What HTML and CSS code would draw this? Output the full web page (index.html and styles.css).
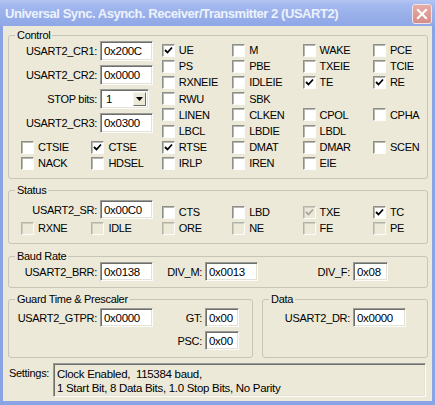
FILE: index.html
```html
<!DOCTYPE html>
<html>
<head>
<meta charset="utf-8">
<link rel="stylesheet" href="styles.css">
</head>
<body>
<div class="window">
  <div class="titlebar">
    <span class="title">Universal Sync. Asynch. Receiver/Transmitter 2 (USART2)</span>
    <span class="close"><svg width="12" height="12" viewBox="0 0 12 12"><path d="M2 2 L10 10 M10 2 L2 10" stroke="#fff" stroke-width="2.2" stroke-linecap="square"/></svg></span>
  </div>
  <div class="client">
    <fieldset class="group control">
      <legend>Control</legend>
      <div class="ctl-top">
        <div class="regs">
          <span class="lbl">USART2_CR1:</span><span class="field">0x200C</span>
          <span class="lbl">USART2_CR2:</span><span class="field">0x0000</span>
          <span class="lbl">STOP bits:</span><span class="combo"><span class="combo-val">1</span><span class="combo-btn"><svg width="7" height="4" viewBox="0 0 7 4"><path d="M0 0 H7 L3.5 4 Z" fill="#000"/></svg></span></span>
          <span class="lbl">USART2_CR3:</span><span class="field">0x0300</span>
        </div>
        <div class="checks4">
          <span class="cb on"><span class="box"><svg width="9" height="9" viewBox="0 0 9 9"><path d="M1 4 L3.5 6.5 L8 1.5" fill="none" stroke="#000" stroke-width="1.8"/></svg></span>UE</span>
          <span class="cb"><span class="box"></span>M</span>
          <span class="cb"><span class="box"></span>WAKE</span>
          <span class="cb"><span class="box"></span>PCE</span>
          <span class="cb"><span class="box"></span>PS</span>
          <span class="cb"><span class="box"></span>PBE</span>
          <span class="cb"><span class="box"></span>TXEIE</span>
          <span class="cb"><span class="box"></span>TCIE</span>
          <span class="cb"><span class="box"></span>RXNEIE</span>
          <span class="cb"><span class="box"></span>IDLEIE</span>
          <span class="cb on"><span class="box"><svg width="9" height="9" viewBox="0 0 9 9"><path d="M1 4 L3.5 6.5 L8 1.5" fill="none" stroke="#000" stroke-width="1.8"/></svg></span>TE</span>
          <span class="cb on"><span class="box"><svg width="9" height="9" viewBox="0 0 9 9"><path d="M1 4 L3.5 6.5 L8 1.5" fill="none" stroke="#000" stroke-width="1.8"/></svg></span>RE</span>
          <span class="cb"><span class="box"></span>RWU</span>
          <span class="cb"><span class="box"></span>SBK</span>
          <span class="empty"></span>
          <span class="empty"></span>
          <span class="cb"><span class="box"></span>LINEN</span>
          <span class="cb"><span class="box"></span>CLKEN</span>
          <span class="cb"><span class="box"></span>CPOL</span>
          <span class="cb"><span class="box"></span>CPHA</span>
          <span class="cb"><span class="box"></span>LBCL</span>
          <span class="cb"><span class="box"></span>LBDIE</span>
          <span class="cb"><span class="box"></span>LBDL</span>
          <span class="empty"></span>
        </div>
      </div>
      <div class="checks6">
        <span class="cb"><span class="box"></span>CTSIE</span>
        <span class="cb on"><span class="box"><svg width="9" height="9" viewBox="0 0 9 9"><path d="M1 4 L3.5 6.5 L8 1.5" fill="none" stroke="#000" stroke-width="1.8"/></svg></span>CTSE</span>
        <span class="cb on"><span class="box"><svg width="9" height="9" viewBox="0 0 9 9"><path d="M1 4 L3.5 6.5 L8 1.5" fill="none" stroke="#000" stroke-width="1.8"/></svg></span>RTSE</span>
        <span class="cb"><span class="box"></span>DMAT</span>
        <span class="cb"><span class="box"></span>DMAR</span>
        <span class="cb"><span class="box"></span>SCEN</span>
        <span class="cb"><span class="box"></span>NACK</span>
        <span class="cb"><span class="box"></span>HDSEL</span>
        <span class="cb"><span class="box"></span>IRLP</span>
        <span class="cb"><span class="box"></span>IREN</span>
        <span class="cb"><span class="box"></span>EIE</span>
        <span class="empty"></span>
      </div>
    </fieldset>

    <fieldset class="group status">
      <legend>Status</legend>
      <div class="status-grid">
        <span class="sr-row"><span class="lbl">USART2_SR:</span><span class="field">0x00C0</span></span>
        <span class="cb up"><span class="box"></span>CTS</span>
        <span class="cb up"><span class="box"></span>LBD</span>
        <span class="cb up dis on"><span class="box"><svg width="9" height="9" viewBox="0 0 9 9"><path d="M1 4 L3.5 6.5 L8 1.5" fill="none" stroke="#a7a69a" stroke-width="1.8"/></svg></span>TXE</span>
        <span class="cb up on"><span class="box"><svg width="9" height="9" viewBox="0 0 9 9"><path d="M1 4 L3.5 6.5 L8 1.5" fill="none" stroke="#000" stroke-width="1.8"/></svg></span>TC</span>
        <span class="cb dis"><span class="box"></span>RXNE</span>
        <span class="cb dis"><span class="box"></span>IDLE</span>
        <span class="cb dis"><span class="box"></span>ORE</span>
        <span class="cb dis"><span class="box"></span>NE</span>
        <span class="cb dis"><span class="box"></span>FE</span>
        <span class="cb dis"><span class="box"></span>PE</span>
      </div>
    </fieldset>

    <fieldset class="group baud">
      <legend>Baud Rate</legend>
      <div class="baud-row">
        <span class="lbl">USART2_BRR:</span><span class="field">0x0138</span>
        <span class="lbl">DIV_M:</span><span class="field">0x0013</span>
        <span class="lbl">DIV_F:</span><span class="field">0x08</span>
      </div>
    </fieldset>

    <div class="pair">
      <fieldset class="group guard">
        <legend>Guard Time &amp; Prescaler</legend>
        <div class="guard-grid">
          <span class="lbl">USART2_GTPR:</span><span class="field">0x0000</span>
          <span class="lbl">GT:</span><span class="field">0x00</span>
          <span class="lbl c3">PSC:</span><span class="field">0x00</span>
        </div>
      </fieldset>
      <fieldset class="group data">
        <legend>Data</legend>
        <div class="data-row">
          <span class="lbl">USART2_DR:</span><span class="field">0x0000</span>
        </div>
      </fieldset>
    </div>

    <div class="settings">
      <span class="settings-lbl">Settings:</span>
      <div class="settings-box">Clock Enabled,&nbsp; 115384 baud,<br>1 Start Bit, 8 Data Bits, 1.0 Stop Bits, No Parity</div>
    </div>
  </div>
</div>
</body>
</html>
```
FILE: styles.css
```css
* { box-sizing: border-box; }
html, body { margin: 0; padding: 0; }
body {
  width: 435px;
  height: 405px;
  overflow: hidden;
  font-family: "Liberation Sans", Arial, sans-serif;
  font-size: 11px;
  letter-spacing: -0.3px;
  color: #000;
  background: #8aa3e4;
}
.window {
  width: 435px;
  height: 405px;
  display: flex;
  flex-direction: column;
  background: #8aa3e4;
}
.titlebar {
  height: 26px;
  flex: none;
  display: flex;
  align-items: center;
  justify-content: space-between;
  padding: 1px 3px 0 5px;
  background: linear-gradient(to bottom, #b3c5f2 0%, #a2b8ee 20%, #98afea 60%, #8fa7e6 100%);
}
.title {
  font-weight: bold;
  font-size: 13px;
  letter-spacing: -0.45px;
  color: #eef2fc;
  white-space: nowrap;
}
.close {
  width: 20px;
  height: 20px;
  margin-top: 1px;
  display: flex;
  align-items: center;
  justify-content: center;
  border: 1px solid #f2e4e6;
  border-radius: 3px;
  background: linear-gradient(to bottom, #e6aba6, #d48e88);
}
.client {
  flex: 1;
  margin: 0 3px 4px 3px;
  background: #ece9d8;
  padding: 3px 4px 0 5px;
  display: flex;
  flex-direction: column;
}
.group {
  margin: 0;
  border: 1px solid #c6c5b6;
  border-radius: 3px;
  padding: 0 6px 6px 6px;
  min-width: 0;
}
.group legend {
  padding: 0 2px;
  line-height: 12px;
  height: 12px;
}
.lbl {
  display: flex;
  align-items: center;
  justify-content: flex-end;
  padding-right: 3px;
  white-space: nowrap;
}
.field {
  display: flex;
  align-items: center;
  height: 19px;
  padding-left: 3px;
  background: #fff;
  border: 1px solid;
  border-color: #9a9a96 #fcfcfa #fcfcfa #9a9a96;
  box-shadow: inset 1px 1px #6e6e6a, inset -1px -1px #e4e2d6;
  font-size: 11.5px;
  white-space: nowrap;
}
.combo {
  display: flex;
  align-items: center;
  justify-content: space-between;
  width: 49px;
  height: 20px;
  padding: 2px 2px 2px 5px;
  background: #fff;
  border: 1px solid;
  border-color: #9a9a96 #fcfcfa #fcfcfa #9a9a96;
  box-shadow: inset 1px 1px #6e6e6a, inset -1px -1px #e4e2d6;
  font-size: 11.5px;
}
.combo-btn {
  width: 13px;
  height: 14px;
  display: flex;
  align-items: center;
  justify-content: center;
  background: #ece9d8;
  border: 1px solid;
  border-color: #f6f5ee #6e6e6a #6e6e6a #f6f5ee;
}

/* Control */
.control { height: 150px; }
.ctl-top {
  display: flex;
  margin-left: 6px;
}
.regs {
  flex: none;
  width: 140.8px;
  display: grid;
  grid-template-columns: 79px 53px;
  grid-auto-rows: 20px;
  row-gap: 4px;
  align-content: start;
}
.regs .field { height: 20px; }
.checks4 {
  flex: none;
  display: grid;
  grid-template-columns: repeat(3, 70.4px) 50px;
  grid-auto-rows: 16.2px;
  padding-top: 1px;
}
.checks6 {
  display: grid;
  grid-template-columns: repeat(5, 70.4px) 50px;
  grid-auto-rows: 16.2px;
  margin-left: 6px;
}
.cb {
  display: flex;
  align-items: center;
  gap: 4px;
  white-space: nowrap;
}
.cb .box {
  width: 13px;
  height: 13px;
  flex: none;
  display: flex;
  align-items: center;
  justify-content: center;
  background: #fff;
  border: 1px solid;
  border-color: #8e8e8a #fcfcfa #fcfcfa #8e8e8a;
  box-shadow: inset 1px 1px #b8b7ad;
}
.cb.dis .box { background: #ece9d8; border-color: #b4b3a8 #fcfcfa #fcfcfa #b4b3a8; box-shadow: inset 1px 1px #cfcdc0; }

/* Status */
.status { margin-top: 5px; padding-top: 4px; padding-bottom: 7px; }
.status-grid {
  display: grid;
  grid-template-columns: repeat(5, 70.4px) 50px;
  grid-template-rows: 20px 16.2px;
  margin-left: 6px;
}
.sr-row {
  grid-column: span 2;
  display: grid;
  grid-template-columns: 79px 53px;
}
.sr-row .field { height: 19px; }
.cb.up { align-self: end; height: 16px; }

/* Baud */
.baud { margin-top: 6px; padding-top: 0; }
.baud-row {
  display: grid;
  grid-template-columns: 79px 53px 52px 53px 95px 35px;
  height: 19px;
  margin-left: 6px;
}

/* Guard + Data */
.pair {
  display: flex;
  gap: 9px;
  margin-top: 5px;
}
.guard { width: 245px; padding-top: 3px; padding-bottom: 7px; }
.data { width: 166px; padding-top: 3px; }
.guard-grid {
  display: grid;
  grid-template-columns: 79px 53px 52px 34px;
  grid-auto-rows: 19px;
  row-gap: 4px;
  margin-left: 6px;
}
.guard-grid .c3 { grid-column: 3; }
.data-row {
  display: grid;
  grid-template-columns: 84px 53px;
  grid-auto-rows: 19px;
}

/* Settings */
.settings {
  display: flex;
  margin-top: 5px;
}
.settings-lbl {
  width: 45px;
  padding-left: 1px;
  padding-top: 3px;
  line-height: 14px;
}
.settings-box {
  width: 373px;
  height: 34px;
  padding: 3px 0 0 3px;
  line-height: 14px;
  border: 1px solid;
  border-color: #9a9a96 #fcfcfa #fcfcfa #9a9a96;
  box-shadow: inset 1px 1px #6e6e6a, inset -1px -1px #e4e2d6;
  font-size: 11.5px;
  background: #ece9d8;
}
```
